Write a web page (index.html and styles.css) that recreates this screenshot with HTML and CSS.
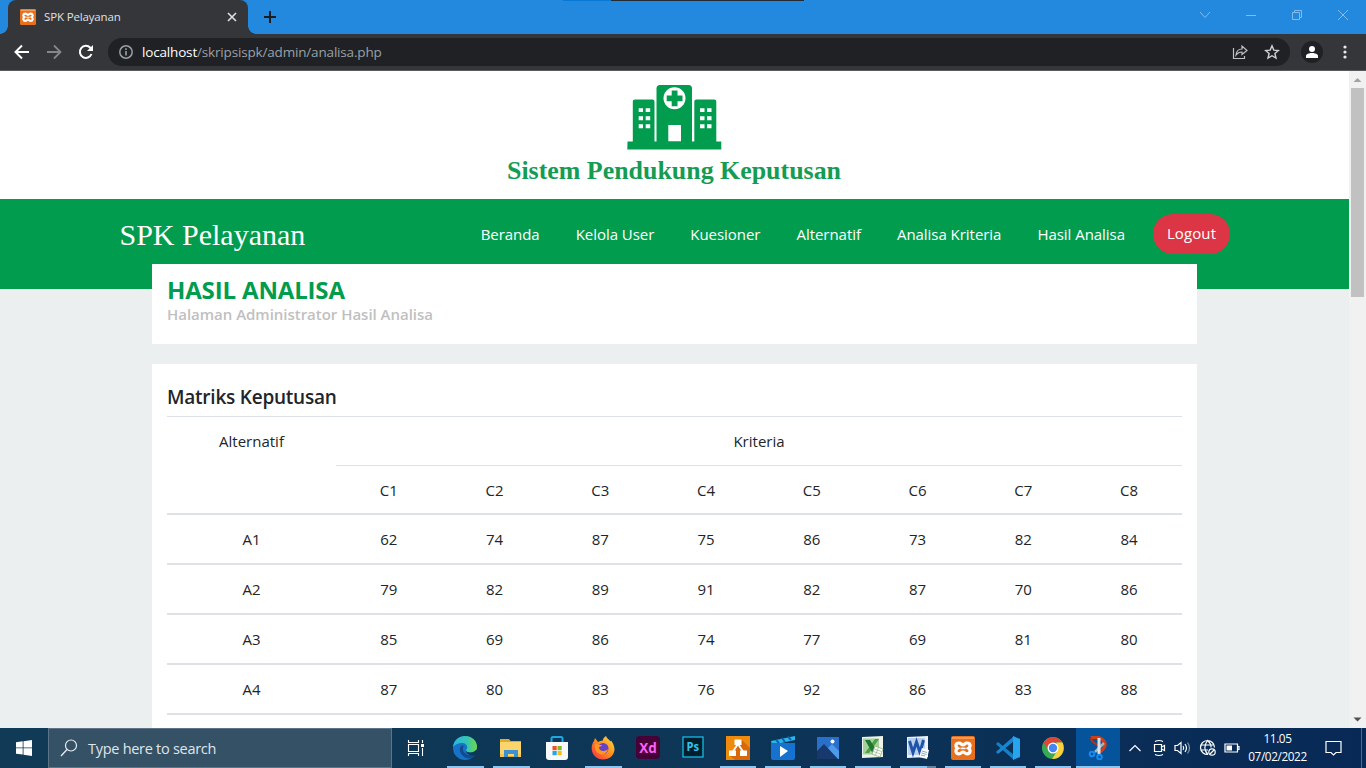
FILE: index.html
```
<!DOCTYPE html>
<html lang="id">
<head>
<meta charset="utf-8">
<title>SPK Pelayanan</title>
<link rel="stylesheet" href="styles.css">
</head>
<body>
<svg class="defs" width="0" height="0">
  <symbol id="xampp" viewBox="0 0 24 24">
    <rect width="24" height="24" rx="2" fill="#e8701c"/><path d="M1 1h22v2H1z" fill="#f79a55"/>
    <path d="M8 7C4.500 7 4 10.500 6.500 12.200 4 14 4.500 17.800 8 17.800 10.200 17.800 10.200 16 12 16S13.800 17.800 16 17.800C19.500 17.800 20 14 17.500 12.200 20 10.500 19.500 7 16 7 13.800 7 13.800 8.800 12 8.800S10.200 7 8 7Z" fill="none" stroke="#fff" stroke-width="3.200"/>
    <path d="M9.500 12.400h5" stroke="#fff" stroke-width="1.600"/>
  </symbol>
</svg>
<div class="screen">
  <header class="tabstrip">
    <div class="tab">
      <svg class="favicon" viewBox="0 0 24 24"><use href="#xampp"/></svg>
      <span class="tab-title">SPK Pelayanan</span>
      <svg class="tab-close" width="10" height="10" viewBox="0 0 10 10"><path d="M1 1l8 8M9 1L1 9" stroke="#dfe1e5" stroke-width="1.600"/></svg>
    </div>
    <svg class="newtab" width="12" height="12" viewBox="0 0 12 12"><path d="M6 0v12M0 6h12" stroke="#1c1d21" stroke-width="2"/></svg>
    <div class="topline"></div>
    <div class="winctl">
      <svg width="12" height="12" viewBox="0 0 12 12"><path d="M1 3l5 5.500L11 3" /></svg>
      <svg width="12" height="12" viewBox="0 0 12 12"><path d="M1 6.500h10"/></svg>
      <svg width="12" height="12" viewBox="0 0 12 12"><path d="M1.500 3.500h7v7h-7zM3.500 3.500v-2h7v7h-2"/></svg>
      <svg width="12" height="12" viewBox="0 0 12 12"><path d="M1 1l10 10M11 1L1 11"/></svg>
    </div>
  </header>
  <div class="toolbar">
    <svg class="tool" width="16" height="16" viewBox="0 0 16 16"><path d="M15 8H2M8 1.500L1.500 8 8 14.500" stroke="#fff" stroke-width="2" fill="none"/></svg>
    <svg class="tool" width="16" height="16" viewBox="0 0 16 16"><path d="M1 8h13M8 1.500L14.500 8 8 14.500" stroke="#85868a" stroke-width="1.800" fill="none"/></svg>
    <svg class="tool" width="16" height="16" viewBox="0 0 16 16"><path d="M13.500 10A6 6 0 1 1 12.300 3.800L14 5.500" stroke="#fff" stroke-width="2" fill="none"/><path d="M15 1v6H9z" fill="#fff"/></svg>
    <div class="omnibox">
      <svg width="14" height="14" viewBox="0 0 14 14"><circle cx="7" cy="7" r="6.200" fill="none" stroke="#9aa0a6" stroke-width="1.500"/><path d="M7 6v4.500M7 3.300v1.600" stroke="#9aa0a6" stroke-width="1.600"/></svg>
      <span class="url"><b>localhost</b>/skripsispk/admin/analisa.php</span>
      <svg class="share" width="16" height="16" viewBox="0 0 16 16"><path d="M1.500 4v10.500h11V12M4 11c.5-4 3-6 6-6V2l5 4.500-5 4V8C7.500 8 5.500 9 4 11Z" fill="none" stroke="#c0c1c4" stroke-width="1.200"/></svg>
      <svg width="16" height="16" viewBox="0 0 16 16"><path d="M8 1.800l1.800 4.300 4.600.4-3.500 3 1.100 4.600L8 11.700l-4 2.400 1.100-4.600-3.500-3 4.600-.4Z" fill="none" stroke="#d0d1d4" stroke-width="1.400"/></svg>
    </div>
    <svg class="avatar" width="22" height="22" viewBox="0 0 22 22"><circle cx="11" cy="11" r="11" fill="#202124"/><circle cx="11" cy="8" r="3" fill="#fff"/><path d="M5 17v-2c0-2 3-3 6-3s6 1 6 3v2z" fill="#fff"/></svg>
    <svg class="dots" width="4" height="14" viewBox="0 0 4 14" fill="#e8eaed"><circle cx="2" cy="2" r="1.600"/><circle cx="2" cy="7" r="1.600"/><circle cx="2" cy="12" r="1.600"/></svg>
  </div>

  <div class="viewport">
    <div class="page">
      <div class="logo">
        <svg width="350" height="120" viewBox="0 0 350 120">
          <path d="M127.500 66.500h5.300V26.500q0-2 2-2H152.500q2 0 2 2v40h2V13.500q0-3.500 3.500-3.500h28.500q3.500 0 3.500 3.500v53h2.300v-40q0-2 2-2h18q2 0 2 2v40h5v8h-94z" fill="#029c4e"/>
          <circle cx="174.500" cy="23.300" r="11" fill="#fff"/>
          <path d="M171.700 15.500h5.800v5h5v5.800h-5v5h-5.800v-5h-5v-5.800h5z" fill="#029c4e"/>
          <path d="M138.700 33.200h4.300v3.800h-4.300zm7 0h4.500v3.800h-4.500zm-7 8.100h4.300v4h-4.300zm7 0h4.500v4h-4.500zm-7 8h4.300v4h-4.300zm7 0h4.500v4h-4.500zM200 33.200h4.500v3.800H200zm7 0h4.500v3.800H207zm-7 8.100h4.500v4H200zm7 0h4.500v4H207zm-7 8h4.500v4H200zm7 0h4.500v4H207zM168.300 50h12.700v16.300h-12.700z" fill="#fff"/>
          <text x="7" y="103.500" class="logo-text" textLength="334" lengthAdjust="spacingAndGlyphs">Sistem Pendukung Keputusan</text>
        </svg>
      </div>
      <nav class="navbar">
        <a class="brand">SPK Pelayanan</a>
        <div class="links"><a>Beranda</a><a>Kelola User</a><a>Kuesioner</a><a>Alternatif</a><a>Analisa Kriteria</a><a>Hasil Analisa</a></div>
        <a class="logout">Logout</a>
      </nav>
      <section class="card heading">
        <h1>HASIL ANALISA</h1>
        <p>Halaman Administrator Hasil Analisa</p>
      </section>
      <section class="card matrix">
        <h2>Matriks Keputusan</h2>
        <div class="table">
          <div class="row top"><span>Alternatif</span><span class="group">Kriteria</span></div>
          <div class="row codes"><span></span><span>C1</span><span>C2</span><span>C3</span><span>C4</span><span>C5</span><span>C6</span><span>C7</span><span>C8</span></div>
          <div class="row"><span>A1</span><span>62</span><span>74</span><span>87</span><span>75</span><span>86</span><span>73</span><span>82</span><span>84</span></div>
          <div class="row"><span>A2</span><span>79</span><span>82</span><span>89</span><span>91</span><span>82</span><span>87</span><span>70</span><span>86</span></div>
          <div class="row"><span>A3</span><span>85</span><span>69</span><span>86</span><span>74</span><span>77</span><span>69</span><span>81</span><span>80</span></div>
          <div class="row"><span>A4</span><span>87</span><span>80</span><span>83</span><span>76</span><span>92</span><span>86</span><span>83</span><span>88</span></div>
          <div class="row"></div>
        </div>
      </section>
    </div>
    <div class="scrollbar">
      <svg width="17" height="17" viewBox="0 0 17 17"><path d="M4.500 11L8.500 7l4 4z" fill="#a3a3a3"/></svg>
      <div class="thumb"></div>
      <svg class="down" width="17" height="17" viewBox="0 0 17 17"><path d="M4.500 6.500h8l-4 4z" fill="#505050"/></svg>
    </div>
  </div>

  <footer class="taskbar">
    <div class="start"><svg width="16" height="16" viewBox="0 0 16 16"><path d="M0 2.300L6.700 1.300v6.200H0zM7.500 1.200L16 0v7.500H7.500zM0 8.300h6.700v6.300L0 13.700zM7.500 8.300H16V16l-8.500-1.200z" fill="#fff"/></svg></div>
    <div class="search"><svg width="18" height="18" viewBox="0 0 18 18"><circle cx="11" cy="6.500" r="5.500" fill="none" stroke="#e8edf1" stroke-width="1.200"/><path d="M7 10.500L1 17" stroke="#e8edf1" stroke-width="1.300"/></svg><span>Type here to search</span></div>
    <div class="taskview"><svg width="18" height="18" viewBox="0 0 18 18" fill="none" stroke="#fff" stroke-width="1.100"><path d="M1.500 1v2.500h10V1M1.500 5.500h10v7h-10zM1.500 17v-2.500h10V17M15.500 1v3M15.500 9v8"/><path d="M14 5h3v3h-3z" fill="#fff" stroke="none"/></svg></div>
    <div class="apps">
      <div class="app w run"><svg viewBox="0 0 24 24"><defs><linearGradient id="e1" x1="0" x2="1"><stop stop-color="#2bb5e8"/><stop offset=".6" stop-color="#35c7b0"/><stop offset="1" stop-color="#70d845"/></linearGradient></defs><circle cx="12" cy="12" r="12" fill="#1673c8"/><path d="M0 11C1 3.500 6.500 0 12 0c8 0 12 6 12 10.500 0 4-3 6-6.500 6-3 0-4.500-1-4.500-2s1.200-1.600 1.200-3.300C14.200 8.500 11.500 7 9 7 5 7 1.500 9 0 11Z" fill="url(#e1)"/><path d="M9 9.500C6 11 6 15.500 9 19c2.500 3 6.500 4 9 3.300C21 21 22.500 19 23 17.500c-6 3.500-12 .5-13-3.500-.3-1.500 0-3 1-4z" fill="#134b91"/><path d="M13 14.500c0 1 1.500 2 4.500 2 2.500 0 4-1 5.500-2.500h2l-1 5c-4 1.500-9 .5-11-3z" fill="#0e3956"/></svg></div>
      <div class="app w run"><svg viewBox="0 0 24 24"><path d="M1 3h9l1.500 2H22v16H1z" fill="#e5aa27"/><path d="M1 6h21v14H1z" fill="#fbd56b"/><path d="M5 14h14v7h-4v-3H9v3H5z" fill="#3c91d4"/><path d="M1 18h4v3H1zm18 0h3v3h-3z" fill="#f4c752"/></svg></div>
      <div class="app w"><svg viewBox="0 0 24 24"><path d="M1 6h22v15q0 3-3 3H4q-3 0-3-3z" fill="#f7f8f9"/><path d="M6.500 6V2.500q0-1.500 1.500-1.500h8q1.500 0 1.500 1.500V6" fill="none" stroke="#1da8e2" stroke-width="2"/><path d="M7.500 10h4.200v4.200H7.500z" fill="#ef5226"/><path d="M12.500 10h4.200v4.200h-4.200z" fill="#7fba21"/><path d="M7.500 15h4.200v4.200H7.500z" fill="#24a6e8"/><path d="M12.500 15h4.200v4.200h-4.200z" fill="#fbbd12"/></svg></div>
      <div class="app w run"><svg viewBox="0 0 24 24"><defs><linearGradient id="f1" x1="1" y1="0" x2="0" y2="1"><stop stop-color="#ffe141"/><stop offset=".5" stop-color="#ff8b1c"/><stop offset="1" stop-color="#fa2754"/></linearGradient></defs><path d="M3 5l1-3 3 4c1.500-1 3-1.300 4.500-1.300C12 3 13 1 15 0c.5 2.500 3 3 4.500 5.500l.5-1c2 2.500 3.500 6 3.500 9C23 20 18 23.500 12 23.500S1 19 .7 13C.6 9.500 1.500 7 3 5Z" fill="url(#f1)"/><circle cx="12" cy="12.500" r="5.500" fill="#6542ca"/><path d="M4 8c3-.5 4 1 7 1-1 1.500-2 1.500-3 2.300 0 4 5 5 9 2-1 5-7 7-11 3-2-2-2.500-5-2-8.300z" fill="#ff9620"/></svg></div>
      <div class="app"><svg viewBox="0 0 24 24"><rect width="24" height="23" rx="4" fill="#470137"/><text x="3.300" y="16.500" class="xd" textLength="17.500" lengthAdjust="spacingAndGlyphs">Xd</text></svg></div>
      <div class="app"><svg viewBox="0 0 24 24"><rect x="2" y="1" width="20" height="20" fill="#001e2c" stroke="#18b9e3" stroke-width="1.300"/><text x="5.500" y="15" class="ps" textLength="12.500" lengthAdjust="spacingAndGlyphs">Ps</text></svg></div>
      <div class="app run"><svg viewBox="0 0 24 24"><path d="M0 0h24v24H0z" fill="#ef8a0d"/><path d="M15 3l9 9v12H9l-6-5 8-9z" fill="#d86809"/><path d="M12 8L6 17m6-9l6 9" stroke="#fff" stroke-width="1.800"/><path d="M8.500 3.500h7V9h-7zM3 14.500h7V20H3zm11 0h7V20h-7z" fill="#fff"/></svg></div>
      <div class="app run"><svg viewBox="0 0 24 24"><path d="M0 5l24-5v4L1 9z" fill="#29b6e9"/><path d="M5 3.800L8 7m3-5l3 4m3-5.400L20 4" stroke="#0b62b5" stroke-width="2"/><path d="M0 7h24v15q0 2-2 2H2q-2 0-2-2z" fill="#1772cf"/><path d="M9 10l8 5-8 6z" fill="#fff"/></svg></div>
      <div class="app run"><svg viewBox="0 0 24 24"><path d="M1 1h22v22H1z" fill="#2a70ca"/><path d="M12 18l-2-4 6-6 7 7v8H12z" fill="#4f9bea"/><path d="M1 15l7-7 14 15H1z" fill="#17396d"/><circle cx="16.500" cy="5.500" r="2" fill="#fff"/></svg></div>
      <div class="app run"><svg viewBox="0 0 24 24"><path d="M1 1l21-1v21l-21 1z" fill="#edf3ea"/><path d="M2 2.500h16v16H2z" fill="#a6d19a"/><path d="M14 3h4L8 17H4z" fill="#4f9e48"/><path d="M4 4h5l8 13h-5.500z" fill="#1c7a30"/><path d="M14 10l8 3-3 8-8-3z" fill="#fff" stroke="#8db482" stroke-width=".8"/><path d="M13.500 13l7 2.500m-8 0l7 2.500m-2-6.500l-3 7.500" stroke="#8db482" stroke-width=".7"/></svg></div>
      <div class="app run split"><svg viewBox="0 0 24 24"><path d="M1 1l21-1v21L1 22z" fill="#eef3fa"/><path d="M2 2h17v17H2z" fill="#b9cfec"/><path d="M3.500 5L7 16.500 10.500 6 14 16.500 17.500 4" stroke="#1f55a8" stroke-width="3" fill="none"/><path d="M16 12l7 2-2 9-8-2z" fill="#fff"/><path d="M16 15l5 1.500M15.500 17l5 1.500M15 19l4 1" stroke="#6e8fbd" stroke-width=".8"/></svg></div>
      <div class="app run"><svg viewBox="0 0 24 24"><use href="#xampp"/></svg></div>
      <div class="app run"><svg viewBox="0 0 24 24"><path d="M0 8l2-2 16 13v5L1 9z" fill="#167fc6"/><path d="M0 16l2 2L18 5V0L1 15z" fill="#1687d3"/><path d="M17 0l7 3v18l-7 3z" fill="#26a4ee"/></svg></div>
      <div class="app run"><svg viewBox="0 0 24 24"><circle cx="12" cy="12" r="11" fill="#36a951"/><path d="M2.500 6.500C7-1 17-1 21.500 6.500H12L7.500 14z" fill="#de4738"/><path d="M21.500 6.500C25 15 20 23 11 23l5.500-8.500-1-8z" fill="#fbd13b"/><circle cx="12" cy="12" r="5.500" fill="#fff"/><circle cx="12" cy="12" r="4.200" fill="#4486f4"/></svg></div>
      <div class="app active"><svg viewBox="0 0 24 24"><path d="M4 1.500C12 0 18 4 18 9q-1 5-6 7" fill="none" stroke="#d13d16" stroke-width="3.500"/><path d="M4 2q0 4 7 7" fill="none" stroke="#b93414" stroke-width="2"/><path d="M8 16L17 7" stroke="#a9b2ba" stroke-width="2.500"/><path d="M12 2v16" stroke="#dce3e7" stroke-width="3"/><circle cx="5" cy="18" r="2.300" fill="none" stroke="#178bed" stroke-width="2"/><circle cx="12.500" cy="21" r="2.300" fill="none" stroke="#178bed" stroke-width="2"/></svg></div>
    </div>
    <div class="tray">
      <svg width="12" height="8" viewBox="0 0 12 8"><path d="M.5 7L6 1.500 11.500 7"/></svg>
      <svg width="14" height="18" viewBox="0 0 14 18"><path d="M1.500 5.500h7v7h-7zM8.500 8l3-1.500v5L8.500 10M2 2.500q4-2 8 0M2 15.500q4 2 8 0"/></svg>
      <svg width="18" height="16" viewBox="0 0 18 16"><path d="M1 5.500h2.500L7 2.500v11L3.500 10.500H1zM9 6q1.500 2 0 4M11 4q3 4 0 8"/><path d="M13.500 2.500q4 5.500 0 11" opacity=".5"/></svg>
      <svg width="18" height="18" viewBox="0 0 18 18"><path d="M9 15.500A7 7 0 1 1 15.500 8.500M9 15.500q-6-6.500-.5-14 4 3.500 3.500 7M2 6h13M2 11h7"/><circle cx="13" cy="13" r="3.200"/><path d="M11 15l4-4"/></svg>
      <svg width="16" height="10" viewBox="0 0 16 10"><path d="M1 1h12.500v8H1zM14 3.500h1v3h-1"/><path d="M2.500 2.500H8v5H2.500z" fill="#fff" stroke="none"/></svg>
    </div>
    <div class="clock"><span>11.05</span><span>07/02/2022</span></div>
    <svg class="notice" width="17" height="17" viewBox="0 0 17 17"><path d="M1 1.500h15v11h-5L8.500 15 6 12.500H1z" fill="none" stroke="#fff" stroke-width="1.200"/></svg>
    <div class="peek"></div>
  </footer>
</div>
</body>
</html>
```
FILE: styles.css
```
* { box-sizing: border-box; }
body { margin: 0; overflow: hidden; font-family: "Open Sans", "Noto Sans", sans-serif; color: #212529; }
svg { display: block; flex: none; }
.defs { position: absolute; }
.screen { width: 1366px; height: 768px; display: flex; flex-direction: column; }

/* Browser window */
.tabstrip { height: 34px; flex: none; background: #2389de; display: flex; align-items: center; padding-left: 8px; }
.tab { position: relative; width: 240px; height: 34px; display: flex; align-items: center; padding: 0 12px; background: #35363a; border-radius: 8px 8px 0 0; }
.tab::before, .tab::after { content: ""; position: absolute; bottom: 0; width: 8px; height: 8px; }
.tab::before { left: -8px; background: radial-gradient(circle at 0 0, transparent 7.500px, #35363a 8px); }
.tab::after { right: -8px; background: radial-gradient(circle at 100% 0, transparent 7.500px, #35363a 8px); }
.favicon { width: 16px; height: 16px; }
.tab-title { margin-left: 8px; margin-top: -1px; font-size: 11.500px; letter-spacing: -.15px; color: #dfe1e5; white-space: nowrap; }
.tab-close { margin-left: auto; margin-right: -1px; }
.newtab { margin-left: 16px; }
.topline { align-self: flex-start; margin-left: 287px; width: 241px; height: 1px; background: linear-gradient(90deg, #0878d7 48px, #232b35 48px); }
.winctl { margin-left: auto; display: flex; gap: 34px; padding: 0 17px 5px 0; }
.winctl svg { fill: none; stroke: #83bceb; stroke-width: 1; }
.toolbar { height: 37px; flex: none; background: #35363a; border-bottom: 1px solid #5a595d; display: flex; align-items: center; padding: 0 0 1px 14px; }
.tool { margin-right: 16px; }
.omnibox { width: 1182px; height: 28px; margin-left: -2px; border-radius: 14px; background: #202124; display: flex; align-items: center; padding: 0 10px 0 11px; }
.url { margin-left: 9px; font-size: 13.500px; letter-spacing: -.17px; color: #9aa0a6; white-space: nowrap; }
.url b { font-weight: 400; color: #fff; }
.share { margin-left: auto; margin-right: 16px; }
.avatar { margin-left: 11px; }
.dots { margin-left: 20px; }

/* Web page */
.viewport { height: 657px; flex: none; display: flex; overflow: hidden; }
.page { width: 1349px; height: 657px; overflow: hidden; background: #ebeff0; }
.logo { height: 128px; background: #fff; display: flex; justify-content: center; padding-top: 4px; }
.logo-text { font: bold 24.500px "Liberation Serif", serif; fill: #149c53; }
.navbar { height: 90px; background: #029c4e; display: flex; align-items: flex-start; padding: 15px 119px 0 119.500px; color: #fff; font-size: 15px; }
.brand { font: 30px/42px "Liberation Serif", serif; }
.links { margin-left: auto; display: flex; gap: 36px; line-height: 40px; letter-spacing: -.04px; white-space: nowrap; }
.logout { width: 77px; height: 40px; margin-left: 28px; border-radius: 20px; background: #dc3545; line-height: 39px; text-align: center; letter-spacing: .1px; }
.card { width: 1045px; margin: 0 auto; padding: 0 15px; background: #fff; }
.heading { position: relative; height: 80px; margin-top: -25px; padding-top: 11px; }
.heading h1 { margin: 0; font-size: 24px; line-height: 30px; font-weight: 700; letter-spacing: -.15px; color: #029c4e; white-space: nowrap; }
.heading p { margin: -1px 0 0; font-size: 15px; line-height: 20px; font-weight: 600; letter-spacing: -.02px; color: #c0c0c0; }
.matrix { margin-top: 20px; height: 364px; padding-top: 20px; }
.matrix h2 { margin: 0; height: 32px; font-size: 19px; line-height: 26px; font-weight: 600; letter-spacing: -.23px; }
.row { display: grid; grid-template-columns: 169px repeat(8, 1fr); height: 50px; border-top: 2px solid #dee2e6; text-align: center; font-size: 15px; line-height: 49px; }
.row.top { height: 49px; border-top-width: 1px; }
.row.codes { height: 48px; border: 0; }
.row.codes span:not(:first-child) { border-top: 1px solid #dee2e6; }
.group { grid-column: 2 / -1; }
.scrollbar { width: 17px; display: flex; flex-direction: column; background: #f1f1f1; }
.thumb { width: 13px; height: 209px; margin-left: 2px; background: #c1c1c1; }
.down { margin-top: auto; }

/* Desktop taskbar */
.taskbar { height: 40px; flex: none; display: flex; background: linear-gradient(90deg, #103a55, #0d3657 50%, #082956); color: #fff; }
.start { width: 48px; display: flex; align-items: center; justify-content: center; }
.search { width: 344px; border: 1px solid #5d7488; background: #345166; display: flex; align-items: center; padding-left: 11px; font-size: 14.500px; letter-spacing: -.28px; color: #e0e5e9; }
.search span { margin-left: 10px; white-space: nowrap; }
.taskview { width: 50px; display: flex; align-items: center; padding-left: 15px; }
.apps { display: flex; }
.app { position: relative; width: 45px; display: flex; align-items: center; justify-content: center; padding-right: 1px; }
.app.w { width: 46px; padding-right: 0; }
.app svg { width: 24px; height: 24px; }
.run::after, .active::after { content: ""; position: absolute; left: 4px; right: 5px; bottom: 0; height: 2px; background: #8ec5ee; }
.app.w.run::after { left: 5px; right: 4px; }
.app.split::after { background: linear-gradient(90deg, #8ec5ee 27px, #66839b 27px); }
.active { width: 44px; padding: 0 0 0 1px; background: #05539b; }
.active::after { left: 0; right: 0; }
.xd { font: 700 14px "Open Sans", sans-serif; fill: #ff61f6; }
.ps { font: 700 12px "Open Sans", sans-serif; fill: #31c5f0; }
.tray { display: flex; align-items: center; gap: 7px; padding-left: 9px; }
.tray svg { fill: none; stroke: #fff; stroke-width: 1.200; }
.tray svg:nth-child(2) { margin: 0 0 0 5px; }
.clock { width: 75px; display: flex; flex-direction: column; align-items: center; padding-top: 1px; font-size: 11.800px; line-height: 18px; letter-spacing: -.4px; }
.notice { margin: 12px 0 0 10px; }
.peek { width: 1px; margin-left: auto; margin-right: 4px; background: #50698a; }
```
